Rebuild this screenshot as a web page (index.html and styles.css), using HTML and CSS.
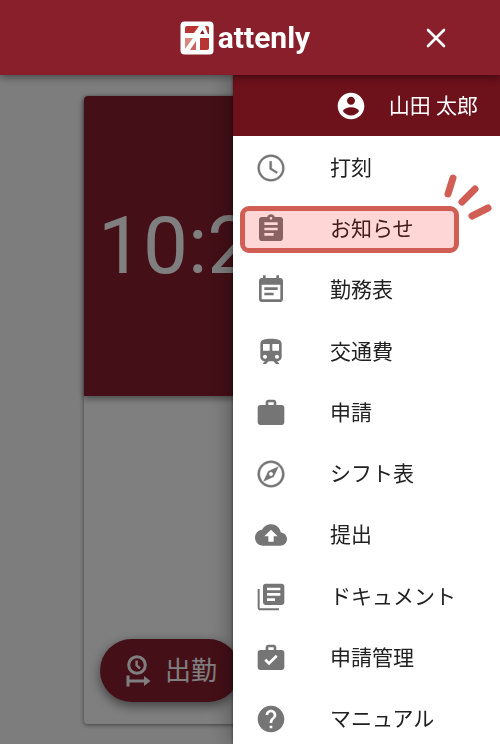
FILE: index.html
```html
<!DOCTYPE html>
<html lang="ja">
<head>
<meta charset="utf-8">
<meta name="viewport" content="width=device-width, initial-scale=1">
<title>attenly</title>
<link rel="stylesheet" href="styles.css">
</head>
<body>
<header class="topbar">
  <a class="brand" href="#">
    <svg class="brand-mark" viewBox="0 0 34 34" aria-hidden="true">
      <rect x="0.5" y="0.5" width="33" height="33" rx="4" fill="#fff"/>
      <path fill="#b93531" d="M5 7q0-2 2-2h12l-5 7H5zM25 5h2q2 0 2 2v6h-1z"/>
      <path fill="#d98781" d="M5 17h8L5 28z"/>
      <path fill="#b93531" d="M20 17h9v10q0 2-2 2h-7z"/>
      <path fill="#c9635d" d="M16 20v9h-6z"/>
      <path fill="#7a1a26" d="M22.500 9l2 4h-4.500z"/>
    </svg>
    <span class="brand-name">attenly</span>
  </a>
  <button class="close" type="button" aria-label="閉じる">
    <svg viewBox="0 0 20 20" aria-hidden="true"><path d="M2 2l16 16M18 2L2 18" stroke="#fff" stroke-width="2.6" stroke-linecap="round"/></svg>
  </button>
</header>

<main class="page">
  <section class="card">
    <div class="clock"><time>10:2</time></div>
    <div class="actions">
      <button class="punch" type="button">
        <svg viewBox="0 0 26 32" aria-hidden="true" fill="none" stroke="#fff">
          <circle cx="12" cy="10" r="8.300" stroke-width="3"/>
          <path d="M11.600 5.500v5l3.400 3" stroke-width="2.400"/>
          <path d="M3 20.500v11" stroke-width="3"/>
          <path d="M3 26h18" stroke-width="3"/>
          <path d="M19 21l6.500 5-6.500 5z" fill="#fff" stroke="none"/>
        </svg>
        <span>出勤</span>
      </button>
    </div>
  </section>
</main>
<div class="backdrop"></div>

<aside class="drawer">
  <div class="user">
    <svg class="icon" viewBox="0 0 24 24" aria-hidden="true"><path d="M12 2C6.480 2 2 6.480 2 12s4.480 10 10 10 10-4.480 10-10S17.520 2 12 2zm0 3c1.660 0 3 1.340 3 3s-1.340 3-3 3-3-1.340-3-3 1.340-3 3-3zm0 14.200c-2.500 0-4.710-1.280-6-3.220.030-1.990 4-3.080 6-3.080 1.990 0 5.970 1.090 6 3.080-1.290 1.940-3.500 3.220-6 3.220z"/></svg>
    <span>山田 太郎</span>
  </div>
  <nav class="menu">
    <a class="item" href="#"><svg class="icon" viewBox="0 0 24 24" aria-hidden="true"><path stroke="currentColor" stroke-width="0.300" d="M11.990 2C6.470 2 2 6.480 2 12s4.470 10 9.990 10C17.520 22 22 17.520 22 12S17.520 2 11.990 2zM12 20.500c-4.700 0-8.500-3.800-8.500-8.500S7.300 3.500 12 3.500s8.500 3.800 8.500 8.500-3.800 8.500-8.500 8.500zM12.500 7H11v6l5.250 3.150.750-1.230-4.500-2.670z"/></svg><span>打刻</span></a>
    <a class="item current" href="#"><svg class="icon" viewBox="0 0 24 24" aria-hidden="true"><path d="M19 3h-4.180C14.400 1.840 13.300 1 12 1c-1.300 0-2.400.840-2.820 2H5c-1.100 0-2 .900-2 2v14c0 1.100.900 2 2 2h14c1.100 0 2-.900 2-2V5c0-1.100-.900-2-2-2zm-7 0c.550 0 1 .450 1 1s-.450 1-1 1-1-.450-1-1 .450-1 1-1zm2 14H7v-2h7v2zm3-4H7v-2h10v2zm0-4H7V7h10v2z"/></svg><span>お知らせ</span>
      <svg class="sparks" viewBox="0 0 64 50" aria-hidden="true"><path d="M17 5L12 21M39 16L26 29M52 35l-16 8" fill="none" stroke="#d05e54" stroke-width="7" stroke-linecap="round"/></svg>
    </a>
    <a class="item" href="#"><svg class="icon" viewBox="0 0 24 24" aria-hidden="true"><path d="M17 10H7v2h10v-2zm2-7h-1V1h-2v2H8V1H6v2H5c-1.110 0-1.990.900-1.990 2L3 19c0 1.100.890 2 2 2h14c1.100 0 2-.900 2-2V5c0-1.100-.900-2-2-2zm0 16H5V8h14v11zm-5-5H7v2h7v-2z"/></svg><span>勤務表</span></a>
    <a class="item" href="#"><svg class="icon" viewBox="0 0 24 24" aria-hidden="true"><path d="M12 2c-4.420 0-8 .500-8 4v9.500C4 17.430 5.570 19 7.500 19L6 20.500v.500h2.230l2-2h3.540l2 2H18v-.500L16.500 19c1.930 0 3.500-1.570 3.500-3.500V6c0-3.500-3.580-4-8-4zM7.500 17c-.830 0-1.500-.670-1.500-1.500S6.670 14 7.500 14s1.500.670 1.500 1.500S8.330 17 7.500 17zm3.500-6H6V6h5v5zm5.500 6c-.830 0-1.500-.670-1.500-1.500s.670-1.500 1.500-1.500 1.500.670 1.500 1.500-.670 1.500-1.500 1.500zm1.500-6h-5V6h5v5z"/></svg><span>交通費</span></a>
    <a class="item" href="#"><svg class="icon" viewBox="0 0 24 24" aria-hidden="true"><path d="M20 6h-4V4c0-1.110-.890-2-2-2h-4c-1.110 0-2 .890-2 2v2H4c-1.110 0-2 .890-2 2v11c0 1.110.890 2 2 2h16c1.110 0 2-.890 2-2V8c0-1.110-.890-2-2-2zm-6 0h-4V4h4v2z"/></svg><span>申請</span></a>
    <a class="item" href="#"><svg class="icon" viewBox="0 0 24 24" aria-hidden="true"><path d="M12 2C6.480 2 2 6.480 2 12s4.480 10 10 10 10-4.480 10-10S17.520 2 12 2zm0 18.400c-4.640 0-8.400-3.760-8.400-8.400S7.360 3.600 12 3.600s8.400 3.760 8.400 8.400-3.760 8.400-8.400 8.400zm-5.500-2.900l7.510-3.490L17.500 6.500 9.990 9.990 6.500 17.500zm5.500-7.100c.880 0 1.600.720 1.600 1.600s-.720 1.600-1.600 1.600-1.600-.720-1.600-1.600.720-1.600 1.600-1.600z" stroke="currentColor" stroke-width="0.300"/></svg><span>シフト表</span></a>
    <a class="item" href="#"><svg class="icon" viewBox="0 0 24 24" aria-hidden="true"><path d="M19.350 10.040C18.670 6.590 15.640 4 12 4 9.110 4 6.600 5.640 5.350 8.040 2.340 8.360 0 10.910 0 14c0 3.310 2.690 6 6 6h13c2.760 0 5-2.240 5-5 0-2.640-2.050-4.780-4.650-4.960zM14 13v4h-4v-4H7l5-5 5 5h-3z"/></svg><span>提出</span></a>
    <a class="item" href="#"><svg class="icon" viewBox="0 0 24 24" aria-hidden="true"><path d="M3.500 6H2v14c0 1.100.900 2 2 2h14v-1.500H3.500V6zM20 2H8c-1.100 0-2 .900-2 2v12c0 1.100.900 2 2 2h12c1.100 0 2-.900 2-2V4c0-1.100-.900-2-2-2zm-1 9H9V9h10v2zm-4 4H9v-2h6v2zm4-8H9V5h10v2z"/></svg><span>ドキュメント</span></a>
    <a class="item" href="#"><svg class="icon" viewBox="0 0 24 24" aria-hidden="true"><path d="M20 6h-4V4c0-1.110-.890-2-2-2h-4c-1.110 0-2 .890-2 2v2H4c-1.110 0-2 .890-2 2v11c0 1.110.890 2 2 2h16c1.110 0 2-.890 2-2V8c0-1.110-.890-2-2-2zM10 4h4v2h-4V4zm.500 13.500L7 14l1.410-1.410 2.090 2.080 5.090-5.080L17 11z"/></svg><span>申請管理</span></a>
    <a class="item" href="#"><svg class="icon" viewBox="0 0 24 24" aria-hidden="true"><path d="M12 2C6.480 2 2 6.480 2 12s4.480 10 10 10 10-4.480 10-10S17.520 2 12 2zm1 17h-2v-2h2v2zm2.070-7.750l-.900.920C13.450 12.900 13 13.500 13 15h-2v-.500c0-1.100.450-2.100 1.170-2.830l1.240-1.260c.370-.360.590-.860.590-1.410 0-1.100-.900-2-2-2s-2 .900-2 2H8c0-2.210 1.790-4 4-4s4 1.790 4 4c0 .880-.360 1.680-.930 2.250z"/></svg><span>マニュアル</span></a>
  </nav>
</aside>
</body>
</html>
```
FILE: styles.css
```css
* {
  box-sizing: border-box;
}

html,
body {
  height: 100%;
}

body {
  margin: 0;
  display: flex;
  flex-direction: column;
  overflow: hidden;
  background: #fafafa;
  color: #212121;
  font-family: Roboto, "Noto Sans CJK JP", sans-serif;
  font-size: 21px;
  line-height: 32px;
}

button {
  border: 0;
  font: inherit;
  cursor: pointer;
}

.topbar {
  position: relative;
  z-index: 3;
  flex: none;
  height: 75px;
  padding: 0 52px;
  display: grid;
  grid-template-columns: 1fr auto 1fr;
  align-items: center;
  background: #8a1f2c;
  box-shadow: 0 2px 8px rgba(0, 0, 0, 0.45);
}

.brand {
  grid-column: 2;
  display: flex;
  align-items: center;
  gap: 4px;
  margin-right: 10px;
  color: #fff;
  text-decoration: none;
}

.brand-mark {
  width: 34px;
  height: 34px;
}

.brand-name {
  font-size: 30px;
  font-weight: 700;
}

.close {
  justify-self: end;
  display: flex;
  padding: 2px;
  background: none;
}

.close svg {
  width: 20px;
  height: 20px;
}

.page {
  flex: 1;
  display: flex;
  padding: 21px 84px 20px;
}

.card {
  flex: 1;
  display: flex;
  flex-direction: column;
  background: #fff;
  border-radius: 4px;
  box-shadow: 0 1px 4px rgba(0, 0, 0, 0.5);
}

.clock {
  height: 300px;
  padding-left: 14px;
  display: flex;
  align-items: center;
  border-radius: 4px 4px 0 0;
  background: #881e2e;
  box-shadow: 0 3px 6px rgba(0, 0, 0, 0.4);
  color: #fff;
  font-size: 80px;
}

.actions {
  flex: 1;
  display: flex;
  align-items: flex-end;
  padding: 0 16px 22px;
}

.punch {
  display: flex;
  align-items: center;
  gap: 14px;
  height: 63px;
  padding: 0 23px 0 25px;
  border-radius: 32px;
  background: #881e2e;
  box-shadow: 0 4px 12px rgba(0, 0, 0, 0.5);
  color: #fff;
  font-size: 26px;
}

.punch svg {
  width: 26px;
  height: 32px;
}

.backdrop {
  position: fixed;
  inset: 0;
  z-index: 1;
  background: rgba(0, 0, 0, 0.5);
}

.drawer {
  position: fixed;
  z-index: 2;
  top: 75px;
  right: 0;
  bottom: 0;
  width: 267px;
  overflow: hidden;
  background: #fff;
  box-shadow: 0 0 24px rgba(0, 0, 0, 0.4), 0 0 3px rgba(0, 0, 0, 0.5);
}

.user {
  display: flex;
  align-items: center;
  justify-content: flex-end;
  gap: 22px;
  height: 61px;
  padding-right: 22px;
  background: #6d111b;
  color: #fff;
}

.icon {
  flex: none;
  width: 32px;
  height: 32px;
  fill: currentColor;
}

.menu {
  display: grid;
  grid-auto-rows: 1fr;
  min-height: 614px;
  padding-top: 1px;
}

.item {
  position: relative;
  display: flex;
  align-items: center;
  gap: 43px;
  padding-left: 22px;
  color: #212121;
  text-decoration: none;
}

.item .icon {
  color: #757575;
}

.current::after {
  content: "";
  position: absolute;
  inset: 8px 41px 7px 7px;
  border: 5px solid #d05e54;
  border-radius: 9px;
  background: rgba(255, 0, 0, 0.16);
  background-clip: padding-box;
}

.sparks {
  position: absolute;
  top: -25px;
  right: 0;
  width: 64px;
  height: 50px;
}
```
